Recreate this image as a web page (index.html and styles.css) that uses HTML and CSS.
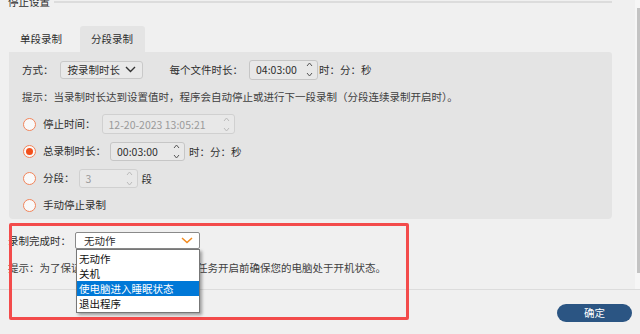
FILE: index.html
```html
<!DOCTYPE html>
<html lang="zh-CN">
<head>
    <meta charset="UTF-8">
    <meta name="viewport" content="width=device-width, initial-scale=1.0">
    <title>停止设置</title>
    <link rel="stylesheet" href="styles.css">
</head>
<body>
<div class="window">
    <div class="scroll_area">
        <div class="content">
            <div class="group_head">
                <span class="group_title">停止设置</span>
                <span class="group_line"></span>
            </div>

            <div class="tabs">
                <div class="tab">单段录制</div>
                <div class="tab active">分段录制</div>
            </div>

            <div class="panel">
                <div class="row">
                    <span class="label">方式：</span>
                    <div class="select mode_select">
                        <span>按录制时长</span>
                        <svg width="11" height="7" viewBox="0 0 11 7"><path d="M1 1 L5.5 5.5 L10 1" fill="none" stroke="#333" stroke-width="1.4"/></svg>
                    </div>
                    <span class="label file_label">每个文件时长：</span>
                    <div class="spin file_spin">
                        <span>04:03:00</span>
                        <svg class="arrows" width="7" height="17" viewBox="0 0 7 17"><path d="M1 5 L3.5 2 L6 5 M1 12 L3.5 15 L6 12" fill="none" stroke="#555" stroke-width="1"/></svg>
                    </div>
                    <span class="unit">时：分：秒</span>
                </div>

                <div class="hint">提示：当录制时长达到设置值时，程序会自动停止或进行下一段录制（分段连续录制开启时）。</div>

                <div class="radio_list">
                    <div class="radio_row">
                        <span class="radio"></span>
                        <span class="label">停止时间：</span>
                        <div class="spin disabled time_spin">
                            <span>12-20-2023 13:05:21</span>
                            <svg class="arrows" width="7" height="17" viewBox="0 0 7 17"><path d="M1 5 L3.5 2 L6 5 M1 12 L3.5 15 L6 12" fill="none" stroke="#bbb" stroke-width="1"/></svg>
                        </div>
                    </div>
                    <div class="radio_row">
                        <span class="radio checked"></span>
                        <span class="label">总录制时长：</span>
                        <div class="spin total_spin">
                            <span>00:03:00</span>
                            <svg class="arrows" width="7" height="17" viewBox="0 0 7 17"><path d="M1 5 L3.5 2 L6 5 M1 12 L3.5 15 L6 12" fill="none" stroke="#555" stroke-width="1"/></svg>
                        </div>
                        <span class="unit total_unit">时：分：秒</span>
                    </div>
                    <div class="radio_row">
                        <span class="radio"></span>
                        <span class="label">分段：</span>
                        <div class="spin disabled part_spin">
                            <span>3</span>
                            <svg class="arrows" width="7" height="17" viewBox="0 0 7 17"><path d="M1 5 L3.5 2 L6 5 M1 12 L3.5 15 L6 12" fill="none" stroke="#bbb" stroke-width="1"/></svg>
                        </div>
                        <span class="unit total_unit">段</span>
                    </div>
                    <div class="radio_row">
                        <span class="radio"></span>
                        <span class="label">手动停止录制</span>
                    </div>
                </div>
            </div>

            <div class="finish">
                <div class="finish_row">
                    <span class="label">录制完成时：</span>
                    <div class="combo">
                        <span>无动作</span>
                        <svg width="12" height="7" viewBox="0 0 12 7"><path d="M1 1 L6 5.5 L11 1" fill="none" stroke="#f28a1e" stroke-width="1.5"/></svg>
                        <ul class="dropdown">
                            <li>无动作</li>
                            <li>关机</li>
                            <li class="selected">使电脑进入睡眠状态</li>
                            <li>退出程序</li>
                        </ul>
                    </div>
                </div>
                <div class="hint finish_hint">提示：为了保证计划任务顺利执行，请在任务开启前确保您的电脑处于开机状态。</div>
            </div>
        </div>
        <div class="scrollbar"><div class="thumb"></div></div>
    </div>

    <div class="footer">
        <button class="ok_btn">确定</button>
    </div>

    <div class="mark"></div>
</div>
</body>
</html>
```

FILE: styles.css
```css
*{
    box-sizing:border-box;
}
body{
    margin:0;
    background:#f0f0f0;
    font-family:"Noto Sans CJK SC","Microsoft YaHei",sans-serif;
    font-size:10.5px;
    color:#2e2e2e;
}
.window{
    position:relative;
    width:640px;
    height:334px;
    overflow:hidden;
    background:#f0f0f0;
}
.scroll_area{
    display:flex;
    height:289px;
}
.content{
    flex:1;
}
.scrollbar{
    width:5px;
    padding-top:8px;
    background:#f6f6f6;
}
.thumb{
    width:3px;
    height:265px;
    margin-left:2px;
    background:#c3c3c3;
}

/* group title */
.group_head{
    display:flex;
    align-items:center;
    height:14px;
    margin-top:-5px;
    padding-left:8px;
    margin-right:23px;
}
.group_title{
    line-height:14px;
}
.group_line{
    flex:1;
    height:2px;
    margin-left:4px;
    background:#dcdcdc;
}

/* tabs */
.tabs{
    display:flex;
    margin-top:17px;
    padding-left:9px;
}
.tab{
    height:26px;
    line-height:26px;
    padding:0 11px;
    margin-right:7px;
}
.tab.active{
    padding:0 12px 0 11px;
    margin-right:0;
    background:#e4e4e4;
    border-radius:3px 3px 0 0;
}

.panel{
    height:167px;
    margin:0 23px 0 9px;
    padding:8px 0 0 13px;
    background:#e4e4e4;
    border-radius:0 3px 4px 4px;
}
.row{
    display:flex;
    align-items:center;
    height:19px;
}
.label{
    line-height:14px;
    white-space:nowrap;
}
.unit{
    margin-left:1px;
    white-space:nowrap;
}
.select{
    display:flex;
    align-items:center;
    justify-content:space-between;
    height:18px;
    padding:0 6px 0 7px;
    border:1px solid #c9c9c9;
    border-radius:3px;
    background:#e9e9e9;
}
.mode_select{
    width:83px;
    margin-left:6px;
}
.file_label{
    margin-left:27px;
}
.spin{
    display:flex;
    align-items:center;
    justify-content:space-between;
    height:20px;
    padding:0 4px 0 6px;
    border:1px solid #c6c6c6;
    border-radius:3px;
    background:#e8e8e8;
}
.spin.disabled{
    color:#9a9a9a;
    border-color:#d0d0d0;
}
.file_spin{
    width:69px;
    margin-left:6px;
}
.hint{
    margin-top:11px;
    line-height:14px;
    white-space:nowrap;
    color:#404040;
}

/* radios */
.radio_list{
    margin-top:10px;
    padding-left:1px;
    display:flex;
    flex-direction:column;
    gap:7px;
}
.radio_row{
    display:flex;
    align-items:center;
    height:20px;
}
.radio{
    width:13px;
    height:13px;
    margin-right:7px;
    border:1px solid #f2845a;
    border-radius:50%;
    background:#f9f9f9;
    position:relative;
}
.radio.checked::after{
    content:"";
    position:absolute;
    left:2px;
    top:2px;
    width:7px;
    height:7px;
    border-radius:50%;
    background:#f2501c;
}
.time_spin{
    width:133px;
    margin-left:6px;
}
.total_spin{
    width:75px;
    height:19px;
    margin-left:4px;
}
.part_spin{
    width:59px;
    height:19px;
    margin-left:4px;
}
.total_unit{
    margin-left:4px;
}

/* finish action */
.finish{
    padding-left:8px;
    padding-top:13px;
}
.finish_row{
    display:flex;
    align-items:center;
    height:17px;
}
.combo{
    position:relative;
    display:flex;
    align-items:center;
    justify-content:space-between;
    width:125px;
    height:17px;
    margin-left:4px;
    padding:0 6px 0 8px;
    border:1px solid #8a8a8a;
    border-radius:2px;
    background:#fff;
}
.dropdown{
    position:absolute;
    top:16px;
    left:0;
    width:124px;
    margin:0;
    padding:1px 0;
    list-style:none;
    background:#fff;
    border:1px solid #777;
    box-shadow:2px 2px 3px rgba(0,0,0,0.35);
    z-index:2;
}
.dropdown li{
    height:15px;
    line-height:15px;
    padding-left:2px;
    color:#111;
    white-space:nowrap;
}
.dropdown li.selected{
    background:#0078d7;
    color:#fff;
}
.finish_hint{
    margin-top:12px;
}

/* footer */
.footer{
    height:45px;
    border-top:1px solid #dcdcdc;
    display:flex;
    justify-content:flex-end;
    align-items:flex-start;
    padding:14px 8px 0 0;
}
.ok_btn{
    width:75px;
    height:18px;
    padding:0;
    border:none;
    border-radius:9px;
    background:#2b5583;
    color:#fff;
    font-family:inherit;
    font-size:10.5px;
    line-height:18px;
}

/* annotation box drawn over the page */
.mark{
    position:absolute;
    left:9px;
    top:223px;
    width:400px;
    height:97px;
    border:3px solid #f34b4b;
    border-radius:2px;
    pointer-events:none;
}
```
